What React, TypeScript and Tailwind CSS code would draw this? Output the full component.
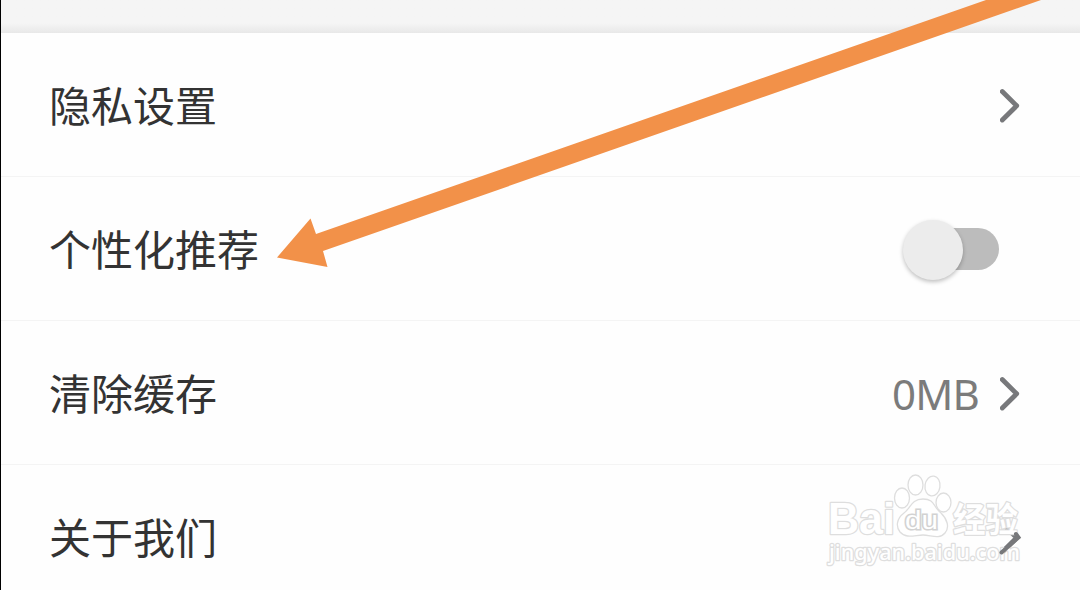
import React from "react";

const Chevron = () => (
  <svg width="20" height="36" viewBox="0 0 20 36" fill="none" className="mt-0.5 block shrink-0">
    <path d="M2.300 3.500 16.700 17.800 2.300 32" stroke="#77787b" strokeWidth="4.800" strokeLinecap="round" strokeLinejoin="round" />
  </svg>
);

function Row({ label, children }: { label: string; children: React.ReactNode }) {
  return (
    <div className="flex h-36 items-center justify-between border-b border-[#f4f4f4] pr-[60px] pl-12">
      <span className="-mt-0.5 text-[42px] leading-[60px] whitespace-nowrap text-[#333333]">{label}</span>
      <div className="flex items-center">{children}</div>
    </div>
  );
}

const Toggle = () => (
  <div className="mr-[21px] flex h-[62px] w-24 items-center" role="switch" aria-checked="false">
    <div className="z-10 mt-0.5 h-[60px] w-[60px] shrink-0 rounded-full bg-[#ececec] shadow-[0_2px_4px_rgba(0,0,0,0.25)]" />
    <div className="-ml-[32px] h-[42px] w-[68px] shrink-0 rounded-full bg-[#bcbcbc]" />
  </div>
);

const Arrow = () => (
  <svg className="pointer-events-none absolute top-0 left-0" width="1080" height="590" viewBox="0 0 1080 590">
    <path d="M277 257.500 310.500 218.500 316 234 986 0H1041L323 251 327.500 267Z" fill="#f29149" />
  </svg>
);

const Watermark = () => (
  <svg
    className="pointer-events-none absolute top-[465px] left-[820px]"
    width="210"
    height="110"
    viewBox="0 0 210 110"
    fill="#ffffff"
    stroke="#dedede"
    strokeWidth="1.300"
  >
    <g style={{ paintOrder: "stroke" }} strokeWidth="2.600" strokeLinejoin="round">
      <text x="8" y="69" fontSize="44" fontWeight="700" fontFamily="Liberation Sans, sans-serif" textLength="67" lengthAdjust="spacingAndGlyphs">Bai</text>
      <text x="133" y="67" fontSize="34" fontWeight="700" fontFamily="Noto Sans CJK SC, sans-serif" textLength="65" lengthAdjust="spacingAndGlyphs">经验</text>
      <text x="9" y="95" fontSize="22" fontWeight="500" fontFamily="Noto Sans, sans-serif" textLength="191" lengthAdjust="spacingAndGlyphs">jingyan.baidu.com</text>
    </g>
    <path d="M196 69 198.500 72.500 181.500 87.500" fill="none" stroke="#77787b" strokeWidth="4" strokeLinecap="round" />
    <ellipse cx="82" cy="33" rx="7.500" ry="10" />
    <ellipse cx="95.500" cy="20" rx="7.500" ry="10" />
    <ellipse cx="112.500" cy="21" rx="7.500" ry="10" transform="rotate(8 112.500 21)" />
    <ellipse cx="123.500" cy="37.500" rx="7.500" ry="9.500" />
    <path d="M103 34C91 34 91 43 84 48C76 54 76 62 80 67C86 74 95 70 103 70C111 70 119 75 125 68C130 62 127 54 121 48C113 42 115 34 103 34Z" />
    <text x="85" y="64" fontSize="26" fontFamily="Liberation Sans, sans-serif" style={{ paintOrder: "stroke" }} stroke="#d2d2d2" strokeWidth="3" textLength="33" lengthAdjust="spacingAndGlyphs">du</text>
  </svg>
);

export default function App() {
  return (
    <main className="relative h-[590px] w-[1080px] overflow-hidden border-l border-black bg-[#fefefe] font-['Noto_Sans_CJK_SC',sans-serif]">
      <div className="h-[33px] bg-linear-to-b from-[#f5f5f5] from-70% to-[#e8e8e8]" />
      <Row label="隐私设置">
        <Chevron />
      </Row>
      <Row label="个性化推荐">
        <Toggle />
      </Row>
      <Row label="清除缓存">
        <span className="mt-0.5 mr-[21px] font-['Noto_Sans',sans-serif] text-[42px] leading-[60px] tracking-[-0.8px] text-[#7b7b7b]">0MB</span>
        <Chevron />
      </Row>
      <Row label="关于我们">
        <Chevron />
      </Row>
      <div className="absolute top-0 -left-px">
        <Arrow />
        <Watermark />
      </div>
    </main>
  );
}
